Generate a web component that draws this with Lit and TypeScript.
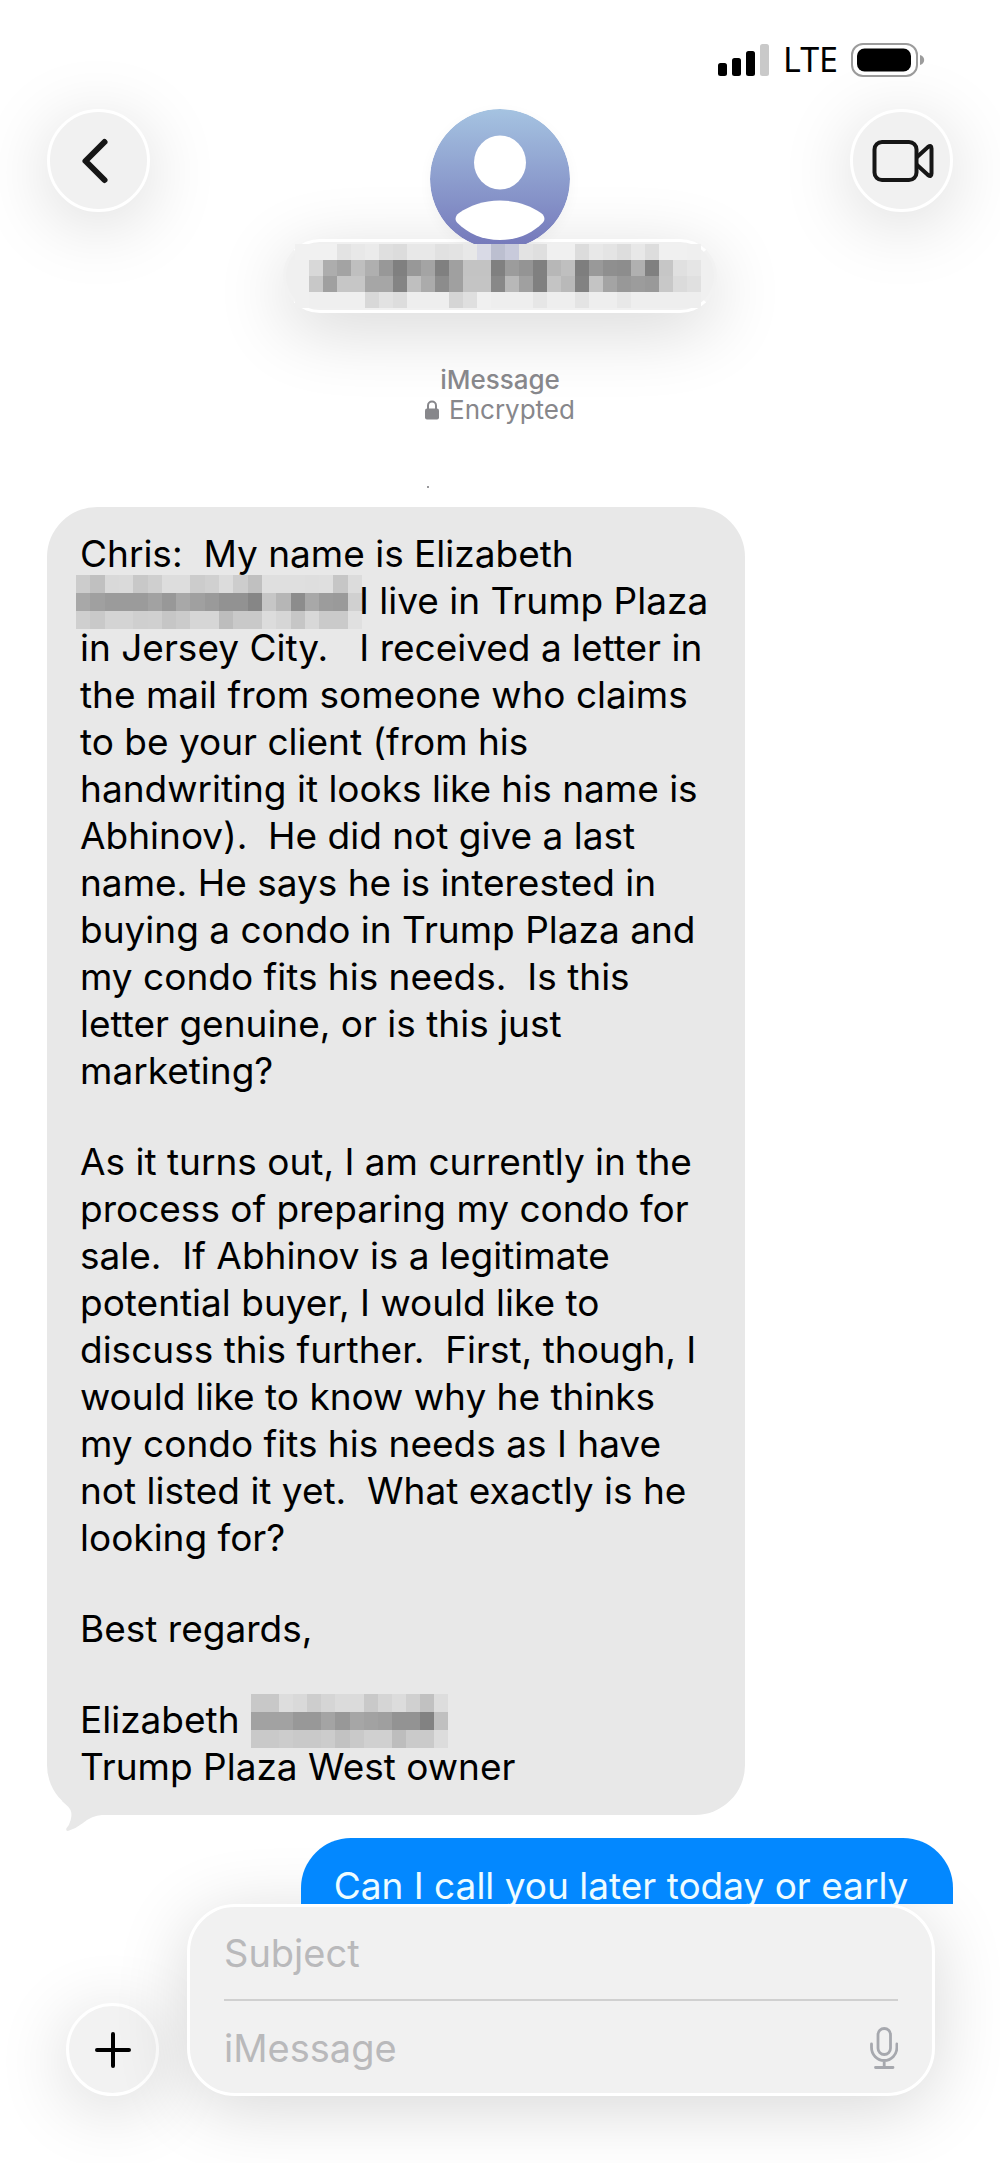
import { LitElement, html, css, svg } from "lit";
import { customElement, property } from "lit/decorators.js";

/* Each row is a list of two-digit grey levels or six-digit colours. */
const CONTACT_ROWS = [
  "f1 f1 f1 e3 e8 eb df dc e8 e8 e1 e3 e8 d9dae6 bcbfd0 c8cadb e3 df f0 f0 dc e8 e4 dd e8 dd f0 f0 ef",
  "f0 d8 ad a3 bf af 98 80 98 a4 80 a0 c3 c3 80 9c 94 80 b7 bf 7e 99 8f 8d b0 80 c6 e0 e5",
  "f0 c8 a0 c6 c6 a6 a6 84 bf ab 8c a0 c4 c4 88 b8 a0 80 c4 b9 82 c4 a4 98 9c 99 c8 db e0",
  "f0 ef ef ef ef d8 e2 dd ee ee ee d5 df f0 ee ee ee e6 ee ee e4 ee ee e8 ee ee ee ee ee",
];
const SURNAME_AND_ROWS = [
  "cc c0 d9 da c8 cf dd dd cc d0 dc cd c0 df df df de df c6 dc",
  "a8 a0 9b 9b 9b a2 98 a8 a0 9a 92 92 86 c6 b6 8c a8 9c 9a d0",
  "cf c9 d4 d4 cf d0 c6 cb d6 d6 bd c9 c9 dc d6 c6 d8 ca ca e0",
];
const SURNAME_ROWS = [
  "c8 c8 dd d9 cd d5 db db c9 d5 dc d0 c1 dd",
  "a2 a2 a2 98 98 a4 98 a6 a2 9f 93 93 82 c0",
  "c9 c9 cc c9 c9 cc c2 c9 d0 d0 bd ca ca dc",
];

const PARAGRAPH_ONE_REST = `I live in Trump Plaza
in Jersey City.   I received a letter in
the mail from someone who claims
to be your client (from his
handwriting it looks like his name is
Abhinov).  He did not give a last
name. He says he is interested in
buying a condo in Trump Plaza and
my condo fits his needs.  Is this
letter genuine, or is this just
marketing?`;

const PARAGRAPH_TWO = `As it turns out, I am currently in the
process of preparing my condo for
sale.  If Abhinov is a legitimate
potential buyer, I would like to
discuss this further.  First, though, I
would like to know why he thinks
my condo fits his needs as I have
not listed it yet.  What exactly is he
looking for?`;

@customElement("pixel-mosaic")
class PixelMosaic extends LitElement {
  @property({ attribute: false }) rows: string[] = [];

  static styles = css`
    :host {
      display: inline-block;
    }
    .grid {
      display: block;
      width: 100%;
      height: 100%;
    }
  `;

  render() {
    const cells = this.rows.map((r) => r.split(" "));
    const cols = cells.length ? cells[0].length : 1;
    return html`<svg
      class="grid"
      viewBox="0 0 ${cols} ${cells.length || 1}"
      preserveAspectRatio="none"
      shape-rendering="crispEdges"
      aria-hidden="true"
    >
      ${cells.map((row, y) =>
        row.map(
          (c, x) =>
            svg`<rect x=${x} y=${y} width="1" height="1" fill=${"#" + (c.length === 2 ? c + c + c : c)}></rect>`
        )
      )}
    </svg>`;
  }
}

@customElement("status-bar")
class StatusBar extends LitElement {
  static styles = css`
    :host {
      display: flex;
      justify-content: flex-end;
      align-items: center;
      gap: 13px;
      padding: 42px 75px 0 0;
      height: 35px;
    }
    .icon {
      display: block;
    }
    .network {
      font: 400 34px/35px "Noto Sans", "Open Sans", sans-serif;
      color: #000;
    }
  `;

  render() {
    return html`
      <svg class="icon" width="52" height="34" viewBox="0 0 52 34" aria-hidden="true">
        <rect x="0" y="20" width="9" height="13" rx="2.5" />
        <rect x="14" y="15" width="9" height="18" rx="2.5" />
        <rect x="28" y="8" width="9" height="25" rx="2.5" />
        <rect x="42" y="1" width="9" height="32" rx="2.5" fill="#c9c9c9" />
      </svg>
      <span class="network">LTE</span>
      <svg class="icon" width="74" height="34" viewBox="0 0 74 34" aria-hidden="true">
        <rect x="1" y="1" width="65" height="32" rx="11" fill="none" stroke="#9c9c9c" stroke-width="2" />
        <rect x="6" y="5.500" width="54" height="23" rx="7.500" />
        <path d="M69 12c2.800 .8 4.200 2.800 4.200 5s-1.400 4.200-4.200 5z" fill="#9c9c9c" />
      </svg>
    `;
  }
}

@customElement("chat-header")
class ChatHeader extends LitElement {
  static styles = css`
    :host {
      display: block;
      padding: 32px 47px 0;
    }
    .bar {
      display: grid;
      grid-template-columns: 103px 1fr 103px;
      align-items: start;
    }
    button {
      font: inherit;
      padding: 0;
      margin: 0;
      cursor: pointer;
    }
    .round {
      display: grid;
      place-items: center;
      width: 103px;
      height: 103px;
      border: 3px solid #fff;
      border-radius: 50%;
      background: #f1f1f1;
      box-shadow: 0 12px 72px rgba(0, 0, 0, 0.15);
    }
    .contact {
      display: flex;
      flex-direction: column;
      align-items: center;
    }
    .avatar {
      display: block;
      position: relative;
      z-index: 1;
      border-radius: 50%;
      box-shadow: 0 4px 14px rgba(0, 0, 0, 0.04);
    }
    .name {
      display: flex;
      justify-content: center;
      align-items: center;
      width: 434px;
      height: 74px;
      margin-top: -10px;
      padding-right: 4px;
      border: 3px solid #fff;
      border-left-color: #f2f2f2;
      border-right-color: #f2f2f2;
      border-radius: 37px;
      background: #f0f0f0;
      box-shadow: 0 16px 72px rgba(0, 0, 0, 0.16);
    }
    .mosaic {
      position: relative;
      z-index: 2;
      width: 406px;
      height: 64px;
    }
  `;

  render() {
    return html`
      <div class="bar">
        <button class="round" aria-label="Back">
          <svg width="60" height="60" viewBox="0 0 60 60" aria-hidden="true">
            <path d="M35.500 11 16.500 30 35.500 49" fill="none" stroke="#161616" stroke-width="6" stroke-linecap="round" stroke-linejoin="round" />
          </svg>
        </button>
        <div class="contact">
          <svg class="avatar" width="140" height="140" viewBox="0 0 140 140" aria-hidden="true">
            <defs>
              <linearGradient id="sky" x1="0" y1="0" x2="0" y2="1">
                <stop offset="0" stop-color="#a5c3e1" />
                <stop offset="1" stop-color="#7477ba" />
              </linearGradient>
            </defs>
            <circle cx="70" cy="70" r="70" fill="url(#sky)" />
            <ellipse cx="70" cy="53.500" rx="26" ry="27" fill="#fff" />
            <path
              d="M70 91.500c17 0 30 5 41 12.500 4 2.800 4.500 7 1.500 10-10.500 10.500-25 17-42.500 17s-32-6.500-42.500-17c-3-3-2.500-7.200 1.500-10C40 96.500 53 91.500 70 91.500z"
              fill="#fff"
            />
          </svg>
          <button class="name" aria-label="Contact">
            <pixel-mosaic class="mosaic" .rows=${CONTACT_ROWS}></pixel-mosaic>
          </button>
        </div>
        <button class="round" aria-label="Video call">
          <svg width="64" height="48" viewBox="0 0 64 48" aria-hidden="true">
            <g fill="none" stroke="#161616" stroke-width="4" stroke-linejoin="round">
              <rect x="4.500" y="5" width="42" height="38" rx="7.500" />
              <path d="M46.500 20.500 58 10q3.500-2.500 3.500 1.500v25q0 4-3.500 1.500L46.500 27.500" />
            </g>
          </svg>
        </button>
      </div>
    `;
  }
}

@customElement("message-thread")
class MessageThread extends LitElement {
  static styles = css`
    :host {
      display: flex;
      flex-direction: column;
      position: relative;
      z-index: 1;
      padding: 52px 47px 0;
      color: #000;
    }
    .notice {
      display: flex;
      flex-direction: column;
      align-items: center;
      font-size: 26px;
      line-height: 30px;
      color: #87878b;
    }
    .service {
      font-weight: 500;
    }
    .secure {
      display: flex;
      align-items: center;
      gap: 10px;
    }
    .speck {
      width: 146px;
      margin: 0 auto;
      padding: 61px 0 19px;
    }
    .speck::before {
      content: "";
      display: block;
      width: 2px;
      height: 2px;
      background: #99999c;
    }
    .bubble {
      box-sizing: border-box;
      position: relative;
      flex: none;
      padding: 24px 33px;
      border-radius: 50px;
      font-size: 37px;
      line-height: 47px;
    }
    .received {
      width: 77%;
      padding-top: 23px;
      padding-bottom: 25px;
      background: #e8e8e8;
    }
    .sent {
      align-self: flex-end;
      width: 72%;
      margin-top: 23px;
      padding-bottom: 71px;
      background: #0388ff;
      color: #eefcff;
    }
    .text {
      margin: 0;
      white-space: pre;
    }
    .text + .text {
      margin-top: 44px;
    }
    .redacted {
      height: 54px;
      margin-top: -2px;
      margin-bottom: -5px;
      vertical-align: top;
    }
    .long {
      width: 286px;
      margin-left: -4px;
      margin-right: -3px;
    }
    .short {
      width: 197px;
      margin-left: 1px;
    }
    .tail {
      position: absolute;
      left: 15px;
      bottom: -17px;
    }
  `;

  render() {
    return html`
      <div class="notice">
        <span class="service">iMessage</span>
        <span class="secure">
          <svg width="14" height="20" viewBox="0 0 14 20" aria-hidden="true">
            <path d="M3 9V5.500a4 4 0 0 1 8 0V9" fill="none" stroke="#87878b" stroke-width="2" />
            <rect x="0" y="8.500" width="14" height="11" rx="2" fill="#87878b" />
          </svg>
          Encrypted
        </span>
      </div>
      <div class="speck"></div>
      <div class="bubble received">
        <p class="text">Chris:  My name is Elizabeth
<pixel-mosaic class="redacted long" .rows=${SURNAME_AND_ROWS}></pixel-mosaic>${PARAGRAPH_ONE_REST}</p>
        <p class="text">${PARAGRAPH_TWO}</p>
        <p class="text">Best regards,</p>
        <p class="text">Elizabeth <pixel-mosaic class="redacted short" .rows=${SURNAME_ROWS}></pixel-mosaic>
Trump Plaza West owner</p>
        <svg class="tail" width="42" height="32" viewBox="0 0 42 32" aria-hidden="true">
          <path d="M0 1 6.500 7Q11 12 8.700 20 7.500 25 4.300 28.500 3.500 31.500 6.500 30.800 14 28.500 21 23 30 15.500 40 15V0z" fill="#e8e8e8" />
        </svg>
      </div>
      <div class="bubble sent">
        <p class="text">Can I call you later today or early</p>
      </div>
    `;
  }
}

@customElement("message-composer")
class MessageComposer extends LitElement {
  static styles = css`
    :host {
      display: flex;
      align-items: flex-end;
      gap: 28px;
      padding: 0 65px 67px 66px;
    }
    button {
      padding: 0;
      margin: 0;
      cursor: pointer;
    }
    .add {
      display: grid;
      place-items: center;
      flex: none;
      width: 93px;
      height: 93px;
      border: 3px solid #fff;
      border-radius: 50%;
      background: #f2f2f2;
      box-shadow: 0 12px 72px rgba(0, 0, 0, 0.16);
    }
    .panel {
      flex: 1;
      min-width: 0;
      padding: 0 34px;
      border: 3px solid #fff;
      border-radius: 48px;
      background: #f1f1f1;
      box-shadow: 0 12px 72px rgba(0, 0, 0, 0.16);
    }
    .row {
      display: flex;
      align-items: center;
      height: 92px;
    }
    .row + .row {
      height: 90px;
      padding-top: 2px;
      border-top: 2px solid #d0d0d0;
    }
    .field {
      flex: 1;
      min-width: 0;
      padding: 0;
      border: 0;
      outline: 0;
      background: none;
      color: #000;
      font: inherit;
      font-size: 38px;
      line-height: 47px;
    }
    .field::placeholder {
      color: #b9b9bb;
      opacity: 1;
    }
    .mic {
      display: block;
      border: 0;
      background: none;
    }
    .glyph {
      display: block;
    }
  `;

  render() {
    return html`
      <button class="add" aria-label="Add attachment">
        <svg width="40" height="40" viewBox="0 0 40 40" aria-hidden="true">
          <path d="M20 4v32M4 20h32" stroke="#000" stroke-width="4" stroke-linecap="round" />
        </svg>
      </button>
      <form class="panel">
        <div class="row">
          <input class="field" type="text" aria-label="Subject" placeholder="Subject" />
        </div>
        <div class="row">
          <input class="field" type="text" aria-label="iMessage" placeholder="iMessage" />
          <button class="mic" type="button" aria-label="Dictate">
            <svg class="glyph" width="28" height="42" viewBox="0 0 28 42" aria-hidden="true">
              <g fill="none" stroke="#a6a8ae" stroke-width="2.800" stroke-linecap="round">
                <rect x="8" y="1.500" width="12.500" height="26" rx="6.250" />
                <path d="M1.500 17v3.500a12.700 13 0 0 0 25.400 0V17M14.200 33.500v7M5.500 40.500h17.500" />
              </g>
            </svg>
          </button>
        </div>
      </form>
    `;
  }
}

@customElement("app-root")
class AppRoot extends LitElement {
  static styles = css`
    :host {
      display: flex;
      flex-direction: column;
      height: 100vh;
      background: #fff;
      font-family: Inter, "Liberation Sans", sans-serif;
      overflow: hidden;
    }
    .thread {
      flex: 1;
      min-height: 0;
      overflow: hidden;
    }
  `;

  render() {
    return html`
      <status-bar></status-bar>
      <chat-header></chat-header>
      <message-thread class="thread"></message-thread>
      <message-composer></message-composer>
    `;
  }
}
